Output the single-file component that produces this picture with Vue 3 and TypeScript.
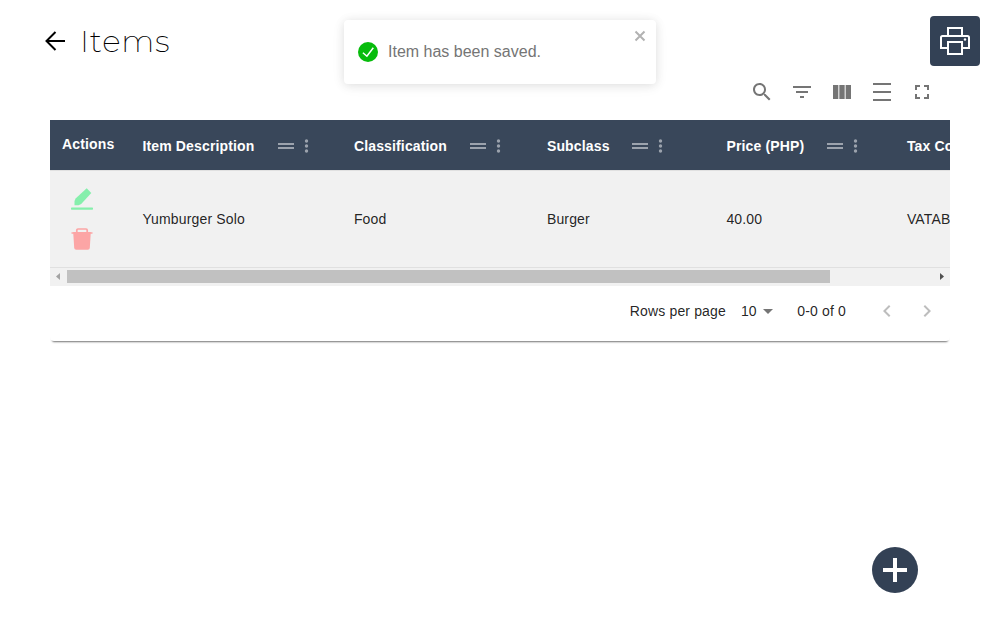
<script setup lang="ts">
interface Column {
  title: string
  value: string
  width: number
  tools: number
}

const columns: Column[] = [
  { title: 'Item Description', value: 'Yumburger Solo', width: 211.5, tools: 135.5 },
  { title: 'Classification', value: 'Food', width: 193, tools: 116 },
  { title: 'Subclass', value: 'Burger', width: 179.5, tools: 85 },
  { title: 'Price (PHP)', value: '40.00', width: 180.5, tools: 101 },
  { title: 'Tax Code', value: 'VATABLE', width: 180, tools: 100 },
]

const tools: string[] = [
  'M15.5 14h-.79l-.28-.27C15.41 12.59 16 11.11 16 9.5 16 5.91 13.09 3 9.5 3S3 5.91 3 9.5 5.91 16 9.5 16c1.61 0 3.09-.59 4.23-1.57l.27.28v.79l5 4.99L20.49 19l-4.99-5zm-6 0C7.01 14 5 11.99 5 9.5S7.01 5 9.5 5 14 7.01 14 9.5 11.99 14 9.5 14z',
  'M10 18h4v-2h-4v2zM3 6v2h18V6H3zm3 7h12v-2H6v2z',
  'M14.67 5v14H9.33V5h5.34zm1 14H21V5h-5.33v14zm-7.34 0V5H3v14h5.33z',
  'M3 3h18v2H3zm0 16h18v2H3zm0-8h18v2H3z',
  'M7 14H5v5h5v-2H7v-3zm-2-4h2V7h3V5H5v5zm12 7h-3v2h5v-5h-2v3zM14 5v2h3v3h2V5h-5z',
]
</script>

<template>
  <main class="page">
    <header class="top">
      <div class="heading">
        <svg class="back" viewBox="0 0 22 22" width="22" height="22">
          <path d="M11.5 2 2.500 11l9 9M2.500 11H21" fill="none" stroke="#000" stroke-width="2" />
        </svg>
        <h1>Items</h1>
      </div>
      <button class="print" aria-label="Print">
        <svg viewBox="0 0 32 32" width="32" height="32" fill="none" stroke="#fff" stroke-width="2">
          <path d="M9 10V3h14v7M9 23H2V12.500A1.500 1.500 0 0 1 3.500 11h25a1.500 1.500 0 0 1 1.500 1.500V23h-7" />
          <path d="M9 17h14v12H9z" />
          <circle cx="26" cy="14.500" r="1.200" fill="#fff" stroke="none" />
        </svg>
      </button>
    </header>

    <section class="panel">
      <div class="toolbar">
        <svg v-for="path in tools" :key="path" viewBox="0 0 24 24" width="24" height="24">
          <path :d="path" fill="#757575" />
        </svg>
      </div>

      <div class="viewport">
        <div class="row head">
          <div class="first">Actions</div>
          <div v-for="c in columns" :key="c.title" class="cell" :style="{ width: c.width + 'px' }">
            <span class="label" :style="{ width: c.tools + 'px' }">{{ c.title }}</span>
            <svg viewBox="0 0 36 16" width="36" height="16" fill="#9ca3ad">
              <path d="M0 5h16v2H0zM0 9h16v2H0z" />
              <circle cx="28.500" cy="3" r="1.700" />
              <circle cx="28.500" cy="8" r="1.700" />
              <circle cx="28.500" cy="13" r="1.700" />
            </svg>
          </div>
        </div>
        <div class="row body">
          <div class="first actions">
            <svg viewBox="0 0 24 24" width="24" height="24" fill="#86efac">
              <path d="m16.700 1.300 4.600 4.600L11.200 17l-2.700 1.300H4.500V14l1.100-2.500z" />
              <rect x="1" y="20.500" width="22" height="2.200" rx=".7" />
            </svg>
            <svg viewBox="0 0 24 24" width="24" height="24">
              <path d="M3.200 5h17.600l-1 16a2 2 0 0 1-2 1.800H6.200a2 2 0 0 1-2-1.800z" fill="#fca5a5" />
              <path d="M1.500 6h21M6.800 6V3.200c0-.8.500-1.200 1.200-1.200h8c.7 0 1.200.4 1.200 1.200V6" fill="none" stroke="#fca5a5" stroke-width="1.700" />
            </svg>
          </div>
          <div v-for="c in columns" :key="c.title" class="cell" :style="{ width: c.width + 'px' }">{{ c.value }}</div>
        </div>
      </div>
      <div class="scroll">
        <svg viewBox="0 0 17 17" width="17" height="17"><path d="M10 5v7L6 8.500z" fill="#a3a3a3" /></svg>
        <div class="track"><div class="thumb"></div></div>
        <svg viewBox="0 0 17 17" width="17" height="17"><path d="M7 5v7l4-3.500z" fill="#505050" /></svg>
      </div>

      <footer class="pager">
        <span class="per">Rows per page</span>
        <span class="size">10</span>
        <svg class="caret" viewBox="0 0 10 5" width="10" height="5"><path d="M0 0h10L5 5z" fill="#757575" /></svg>
        <span class="range">0-0 of 0</span>
        <svg class="prev" viewBox="0 0 24 24" width="24" height="24"><path d="M15.410 7.410 14 6l-6 6 6 6 1.410-1.410L10.830 12z" fill="#bdbdbd" /></svg>
        <svg viewBox="0 0 24 24" width="24" height="24"><path d="M10 6 8.590 7.410 13.170 12l-4.580 4.590L10 18l6-6z" fill="#bdbdbd" /></svg>
      </footer>
    </section>

    <div class="toast" role="alert">
      <svg viewBox="0 0 20 20" width="20" height="20">
        <circle cx="10" cy="10" r="10" fill="#07bc0c" />
        <path d="m4.900 10.700 4 3.500 6.400-8.500" fill="none" stroke="#fff" stroke-width="1.500" />
      </svg>
      <span>Item has been saved.</span>
      <svg class="close" viewBox="0 0 12 12" width="12" height="12">
        <path d="m1.500 1.500 9 9m0-9-9 9" stroke="#b2b2b2" stroke-width="2" />
      </svg>
    </div>

    <button class="add" aria-label="Add item">
      <svg viewBox="0 0 46 46" width="46" height="46"><path d="M11 23h24M23 11v24" stroke="#fff" stroke-width="4" /></svg>
    </button>
  </main>
</template>

<style>
body {
  background: #fff;
}
</style>

<style scoped>
.page {
  box-sizing: border-box;
  position: relative;
  width: 1000px;
  height: 625px;
  padding: 16px 20px 0 44px;
  overflow: hidden;
  font-family: "Liberation Sans", Arial, sans-serif;
  font-size: 14px;
  letter-spacing: 0.15px;
  color: rgba(0, 0, 0, 0.87);
}
svg {
  display: block;
  flex: none;
}
button {
  border: 0;
  padding: 0;
  display: flex;
  align-items: center;
  justify-content: center;
  background: #334155;
}
.top {
  display: flex;
  justify-content: space-between;
  height: 50px;
}
.heading {
  display: flex;
  align-items: center;
  gap: 14px;
}
h1 {
  margin: 0;
  font: 250 31px/50px Montserrat, Inter, sans-serif;
  letter-spacing: 0.8px;
  color: #000;
}
.print {
  width: 50px;
  height: 50px;
  border-radius: 4px;
}
.panel {
  width: 900px;
  height: 275px;
  margin-left: 6px;
  border-radius: 4px;
  box-shadow: 0 3px 2px -2px rgba(0, 0, 0, 0.55);
}
.toolbar {
  box-sizing: border-box;
  display: flex;
  justify-content: flex-end;
  gap: 16px;
  height: 54px;
  padding: 14px 16px 0 0;
}
.viewport {
  overflow: hidden;
}
.row {
  display: flex;
  width: max-content;
}
.head {
  height: 50px;
  background: #39475a;
  color: #fff;
  font-weight: 700;
}
.cell {
  display: flex;
  align-items: center;
  flex: none;
}
.head .cell {
  padding-top: 2px;
  box-sizing: border-box;
}
.label {
  flex: none;
  white-space: nowrap;
}
.first {
  box-sizing: border-box;
  width: 92.4px;
  padding-left: 12px;
  line-height: 48px;
}
.body {
  box-sizing: border-box;
  height: 98px;
  border-top: 1px solid #e0e0e0;
  border-bottom: 1px solid #e0e0e0;
  background: #f1f1f1;
}
.actions {
  padding: 16px 0 0 20px;
  display: flex;
  flex-direction: column;
  gap: 16px;
}
.scroll {
  box-sizing: border-box;
  display: flex;
  align-items: center;
  height: 18px;
  padding-bottom: 1px;
  background: #f1f1f1;
}
.track {
  flex: 1;
}
.thumb {
  width: 763px;
  height: 13px;
  background: #c1c1c1;
}
.pager {
  display: flex;
  align-items: center;
  justify-content: flex-end;
  height: 50px;
  padding-right: 11px;
}
.size {
  margin: 0 0 1px 15px;
}
.caret {
  margin-left: 6px;
}
.range {
  margin-left: 24.5px;
}
.prev {
  margin: 0 16px 0 29px;
}
.toast {
  box-sizing: border-box;
  position: absolute;
  left: 344px;
  top: 20px;
  width: 312px;
  height: 64px;
  padding: 0 14px;
  display: flex;
  align-items: center;
  gap: 10px;
  border-radius: 4px;
  background: #fff;
  box-shadow: 0 1px 10px rgba(0, 0, 0, 0.1), 0 2px 15px rgba(0, 0, 0, 0.05);
  font-size: 16px;
  letter-spacing: 0;
  color: #757575;
}
.close {
  position: absolute;
  left: 290px;
  top: 10px;
}
.add {
  position: absolute;
  left: 872px;
  top: 547px;
  width: 46px;
  height: 46px;
  border-radius: 50%;
}
</style>
